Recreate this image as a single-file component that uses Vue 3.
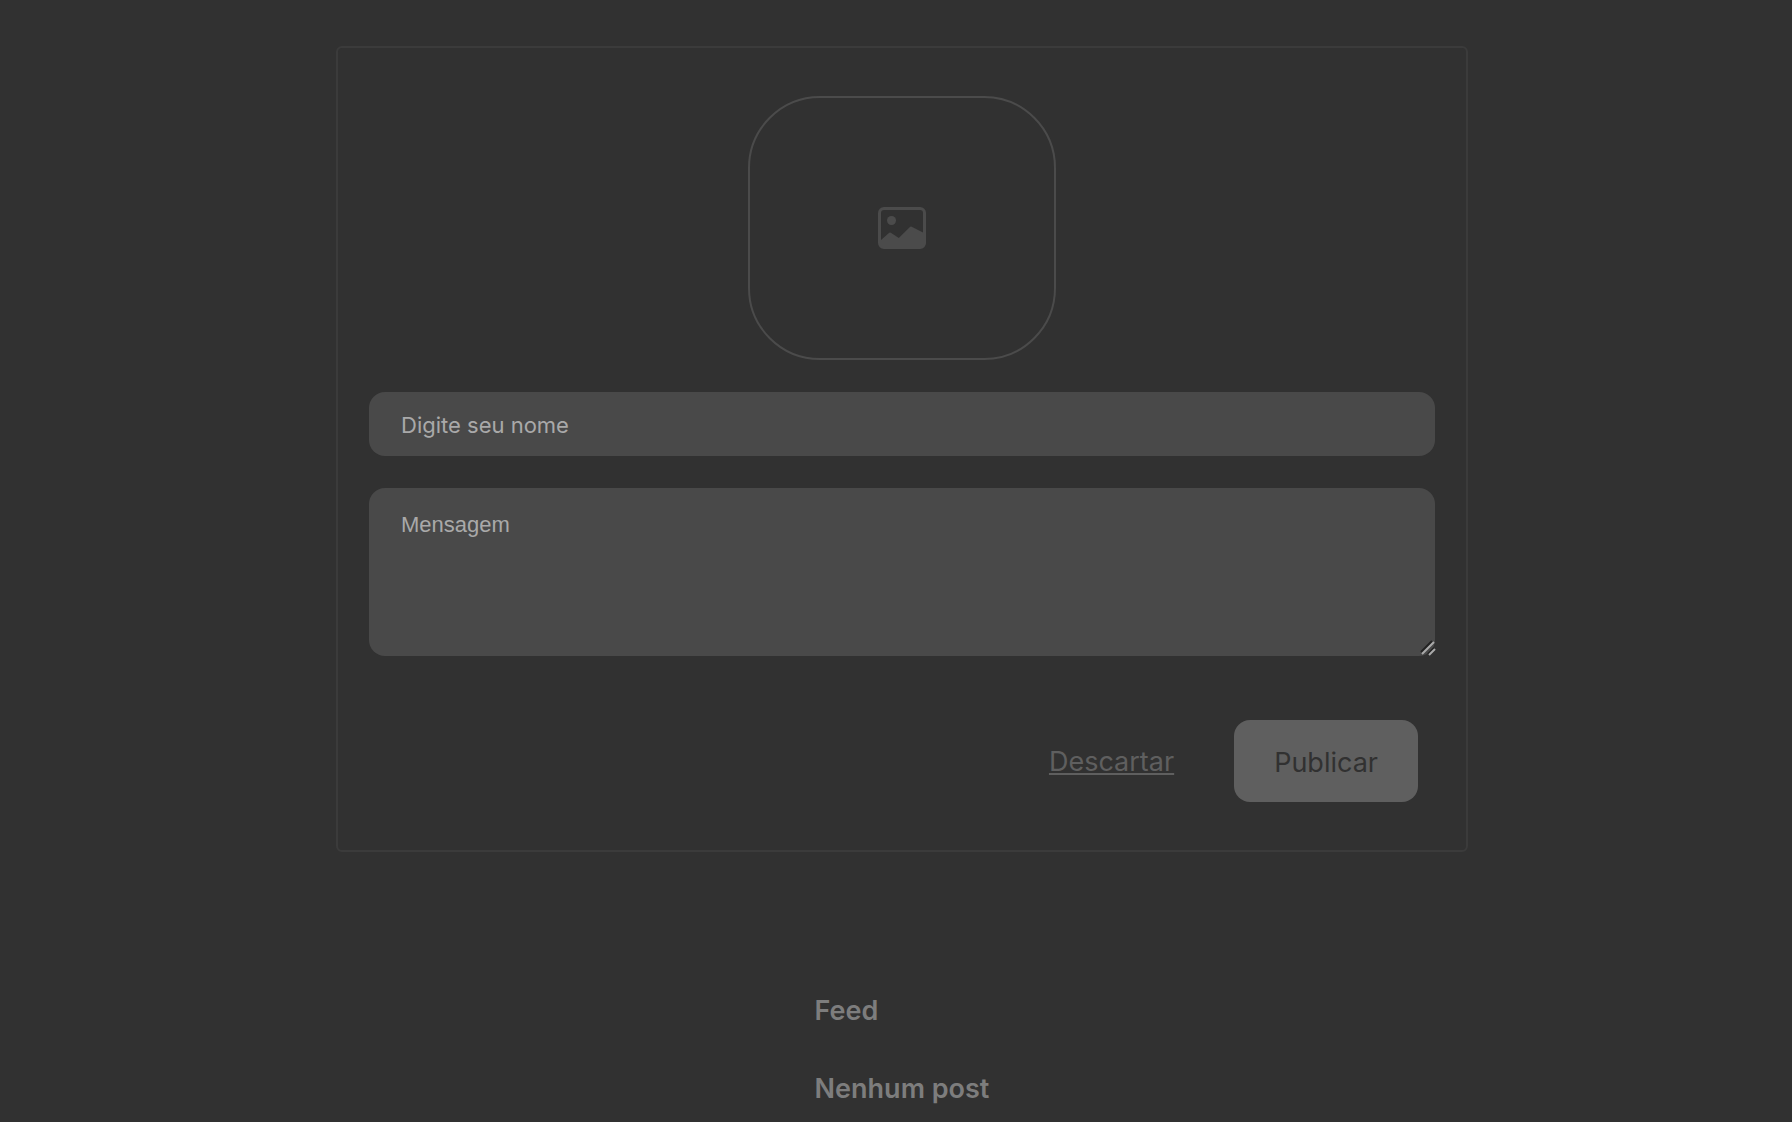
<script setup>
import { ref } from 'vue'

const name = ref('')
const message = ref('')
const posts = ref([])

function discard() {
  name.value = ''
  message.value = ''
}

function publish() {
  if (!name.value || !message.value) return
  posts.value.unshift({ id: Date.now(), name: name.value, message: message.value })
  discard()
}
</script>

<template>
  <main class="page">
    <form class="card" @submit.prevent="publish">
      <button class="upload" type="button" aria-label="Adicionar imagem">
        <svg width="48" height="48" viewBox="0 0 16 16" fill="currentColor" aria-hidden="true">
          <path d="M6.002 5.5a1.5 1.5 0 1 1-3 0 1.5 1.5 0 0 1 3 0z" />
          <path d="M2.002 1a2 2 0 0 0-2 2v10a2 2 0 0 0 2 2h12a2 2 0 0 0 2-2V3a2 2 0 0 0-2-2h-12zm12 1a1 1 0 0 1 1 1v6.5l-3.777-1.947a.5.5 0 0 0-.577.093l-3.71 3.71-2.66-1.772a.5.5 0 0 0-.63.062L1.002 12V3a1 1 0 0 1 1-1h12z" />
        </svg>
      </button>

      <input v-model="name" class="field" type="text" placeholder="Digite seu nome" aria-label="Digite seu nome" />

      <div class="message">
        <textarea v-model="message" class="field area" placeholder="Mensagem" aria-label="Mensagem"></textarea>
        <svg class="grip" width="16" height="16" viewBox="0 0 16 16" fill="none" stroke-width="2" aria-hidden="true">
          <path d="M1 12L12 1M8 14L14 8" stroke="#222" />
          <path d="M2 14L14 2M9 15L15 9" stroke="#a9a9a9" />
        </svg>
      </div>

      <div class="actions">
        <button class="discard" type="button" @click="discard">Descartar</button>
        <button class="publish" type="submit">Publicar</button>
      </div>
    </form>

    <section class="feed">
      <h2>Feed</h2>
      <h2 v-if="!posts.length">Nenhum post</h2>
      <p v-for="post in posts" :key="post.id">{{ post.name }}: {{ post.message }}</p>
    </section>
  </main>
</template>

<style>
body {
  margin: 0;
  background: #313131;
}
</style>

<style scoped>
.page {
  display: flex;
  flex-direction: column;
  align-items: center;
  padding: 46px 0 0 12px;
  font-family: Inter, "Liberation Sans", sans-serif;
  color: #7d7d7d;
}

.card {
  box-sizing: border-box;
  display: flex;
  flex-direction: column;
  gap: 32px;
  width: 100%;
  max-width: 1132px;
  padding: 48px 31px 48px 31px;
  border: 2px solid #3b3b3b;
  border-radius: 6px;
}

button {
  padding: 0;
  border: 0;
  background: none;
  font: inherit;
  cursor: pointer;
}

.upload {
  display: flex;
  align-items: center;
  justify-content: center;
  align-self: center;
  width: 308px;
  height: 264px;
  border: 2px solid #4b4b4b;
  border-radius: 72px;
  color: #4b4b4b;
}

.field {
  box-sizing: border-box;
  display: block;
  width: 100%;
  height: 64px;
  padding: 2px 32px 0;
  border: 0;
  border-radius: 16px;
  outline: 0;
  background: #494949;
  color: #fff;
  font: 22px/28px Inter, "Liberation Sans", sans-serif;
}

.field::placeholder {
  color: #a9a9a9;
  opacity: 1;
}

.message {
  position: relative;
}

.area {
  height: 168px;
  padding: 23px 32px;
  resize: none;
  font-family: "Liberation Sans", Arial, sans-serif;
}

.grip {
  position: absolute;
  right: -1px;
  bottom: 0;
}

.actions {
  display: flex;
  align-items: center;
  justify-content: flex-end;
  gap: 60px;
  padding: 32px 17px 0 0;
  font-size: 27px;
  line-height: 34px;
}

.discard {
  padding-top: 2px;
  color: #5f5f5f;
  text-decoration: underline;
  text-decoration-thickness: 2px;
  text-underline-offset: 2px;
}

.publish {
  padding: 26px 40px 22px;
  border-radius: 16px;
  background: #5f5f5f;
  color: #313131;
}

.feed {
  display: flex;
  flex-direction: column;
  gap: 44px;
  padding-top: 142px;
}

.feed h2,
.feed p {
  margin: 0;
  font-size: 27px;
  font-weight: 600;
  line-height: 34px;
}
</style>
